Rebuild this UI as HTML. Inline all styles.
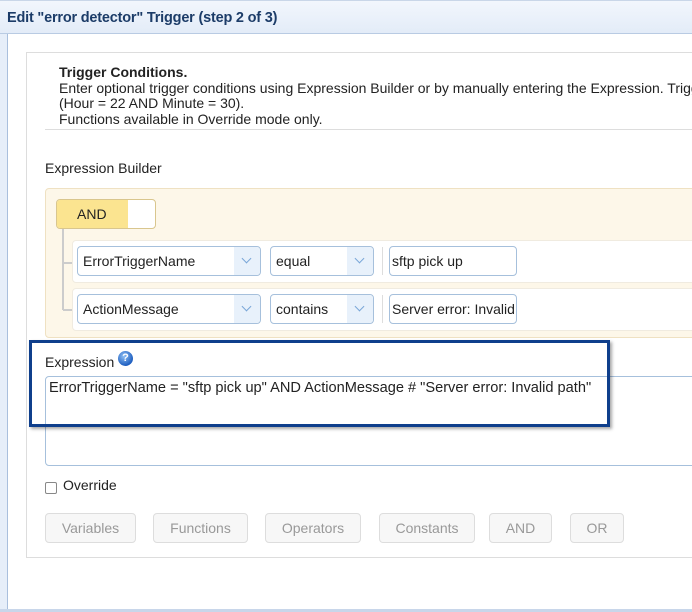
<!DOCTYPE html>
<html><head><meta charset="utf-8"><style>
*{box-sizing:border-box;margin:0;padding:0}
body{width:692px;height:612px;overflow:hidden;background:#fff;font-family:"Liberation Sans",Arial,sans-serif;font-size:14px;color:#222;position:relative}
.abs{position:absolute}
.title{left:0;top:0;width:692px;height:34px;background:linear-gradient(#f2f6fc,#e3ecf8);border-bottom:1px solid #b9cbe3;border-top:1px solid #c9d6e8}
.title span{position:absolute;left:7px;top:9px;font-weight:bold;font-size:14.5px;color:#1c3c68;letter-spacing:-0.2px}
.lb{left:0;top:34px;width:8px;height:578px;background:#e6eef9;border-right:1px solid #a9bfdd}
.bb{left:0;top:609px;width:692px;height:3px;background:#c8d6ea}
.panel{left:26px;top:52px;width:700px;height:506px;border:1px solid #ddd;background:#fff}
.desc{left:59px;top:65px;line-height:15.6px;font-size:14px;color:#222;white-space:nowrap}
.sep{left:45px;top:129px;width:650px;height:1px;background:#ddd}
.sel{border:1px solid #a6c0dc;border-radius:4px;background:#fff;height:30px}
.sel span{position:absolute;left:5px;top:6px}
.sel i{position:absolute;right:0;top:0;width:26px;height:28px;background:#e8f1fb;border-radius:0 4px 4px 0}
.sel i:after{content:"";position:absolute;left:9px;top:8px;width:6px;height:6px;border-right:1.5px solid #7aa7d8;border-bottom:1.5px solid #7aa7d8;transform:rotate(45deg)}
.btn{top:513px;height:30px;border:1px solid #ddd;border-radius:4px;background:#f7f7f7;color:#999;text-align:center;line-height:28px}
</style></head><body>
<div class="abs title"><span>Edit "error detector" Trigger (step 2 of 3)</span></div>
<div class="abs lb"></div>
<div class="abs panel"></div>
<div class="abs desc"><b>Trigger Conditions.</b><br>Enter optional trigger conditions using Expression Builder or by manually entering the Expression. Trigger<br>(Hour = 22 AND Minute = 30).<br>Functions available in Override mode only.</div>
<div class="abs sep"></div>
<div class="abs" style="left:45px;top:160px">Expression Builder</div>
<div class="abs" style="left:45px;top:188px;width:660px;height:150px;background:#fdf7e9;border:1px solid #efe1c2;border-radius:4px"></div>
<div class="abs" style="left:56px;top:199px;width:100px;height:30px;border:1px solid #d9c68e;border-radius:4px;background:#fff;overflow:hidden"><div style="width:71px;height:28px;background:#fbe490;line-height:28px;padding-left:20px">AND</div></div>
<div class="abs" style="left:62px;top:229px;width:10px;height:81px;border-left:2px solid #ccc;"></div>
<div class="abs" style="left:63px;top:262px;width:10px;height:2px;background:#ccc"></div>
<div class="abs" style="left:63px;top:309px;width:10px;height:2px;background:#ccc"></div>
<div class="abs" style="left:72px;top:240px;width:640px;height:43px;background:#fff;border:1px solid #f0ebe0;border-radius:4px"></div>
<div class="abs" style="left:72px;top:288px;width:640px;height:43px;background:#fff;border:1px solid #f0ebe0;border-radius:4px"></div>
<div class="abs sel" style="left:77px;top:246px;width:184px"><span>ErrorTriggerName</span><i></i></div>
<div class="abs sel" style="left:270px;top:246px;width:104px"><span>equal</span><i></i></div>
<div class="abs" style="left:382px;top:247px;width:1px;height:28px;background:#ddd"></div>
<div class="abs sel" style="left:389px;top:246px;width:128px"><span style="left:2px">sftp pick up</span></div>
<div class="abs sel" style="left:77px;top:294px;width:184px"><span>ActionMessage</span><i></i></div>
<div class="abs sel" style="left:270px;top:294px;width:104px"><span>contains</span><i></i></div>
<div class="abs" style="left:382px;top:295px;width:1px;height:28px;background:#ddd"></div>
<div class="abs sel" style="left:389px;top:294px;width:128px"><span style="left:2px">Server error: Invalid</span></div>
<div class="abs" style="left:45px;top:376px;width:660px;height:90px;border:1px solid #a6c0dc;border-radius:4px"></div>
<div class="abs" style="left:29px;top:340px;width:581px;height:87px;border:3px solid #0f3f8c;box-shadow:2px 2px 3px rgba(0,0,0,.35)"></div>
<div class="abs" style="left:45px;top:354px">Expression</div>
<div class="abs" style="left:118px;top:351px;width:15px;height:15px;border-radius:50%;background:radial-gradient(circle at 40% 35%,#8fc0f5,#1f5fc0 70%);color:#fff;font-size:11px;font-weight:bold;text-align:center;line-height:15px">?</div>
<div class="abs" style="left:49px;top:380px;font-size:14.6px">ErrorTriggerName = "sftp pick up" AND ActionMessage # "Server error: Invalid path"</div>
<div class="abs" style="left:45px;top:482px;width:12px;height:12px;border:1px solid #888;border-radius:2px;background:#fff"></div>
<div class="abs" style="left:63px;top:477px">Override</div>
<div class="abs btn" style="left:45px;width:91px">Variables</div>
<div class="abs btn" style="left:153px;width:95px">Functions</div>
<div class="abs btn" style="left:265px;width:96px">Operators</div>
<div class="abs btn" style="left:379px;width:96px">Constants</div>
<div class="abs btn" style="left:489px;width:63px">AND</div>
<div class="abs btn" style="left:570px;width:54px">OR</div>
<div class="abs bb"></div>
</body></html>
